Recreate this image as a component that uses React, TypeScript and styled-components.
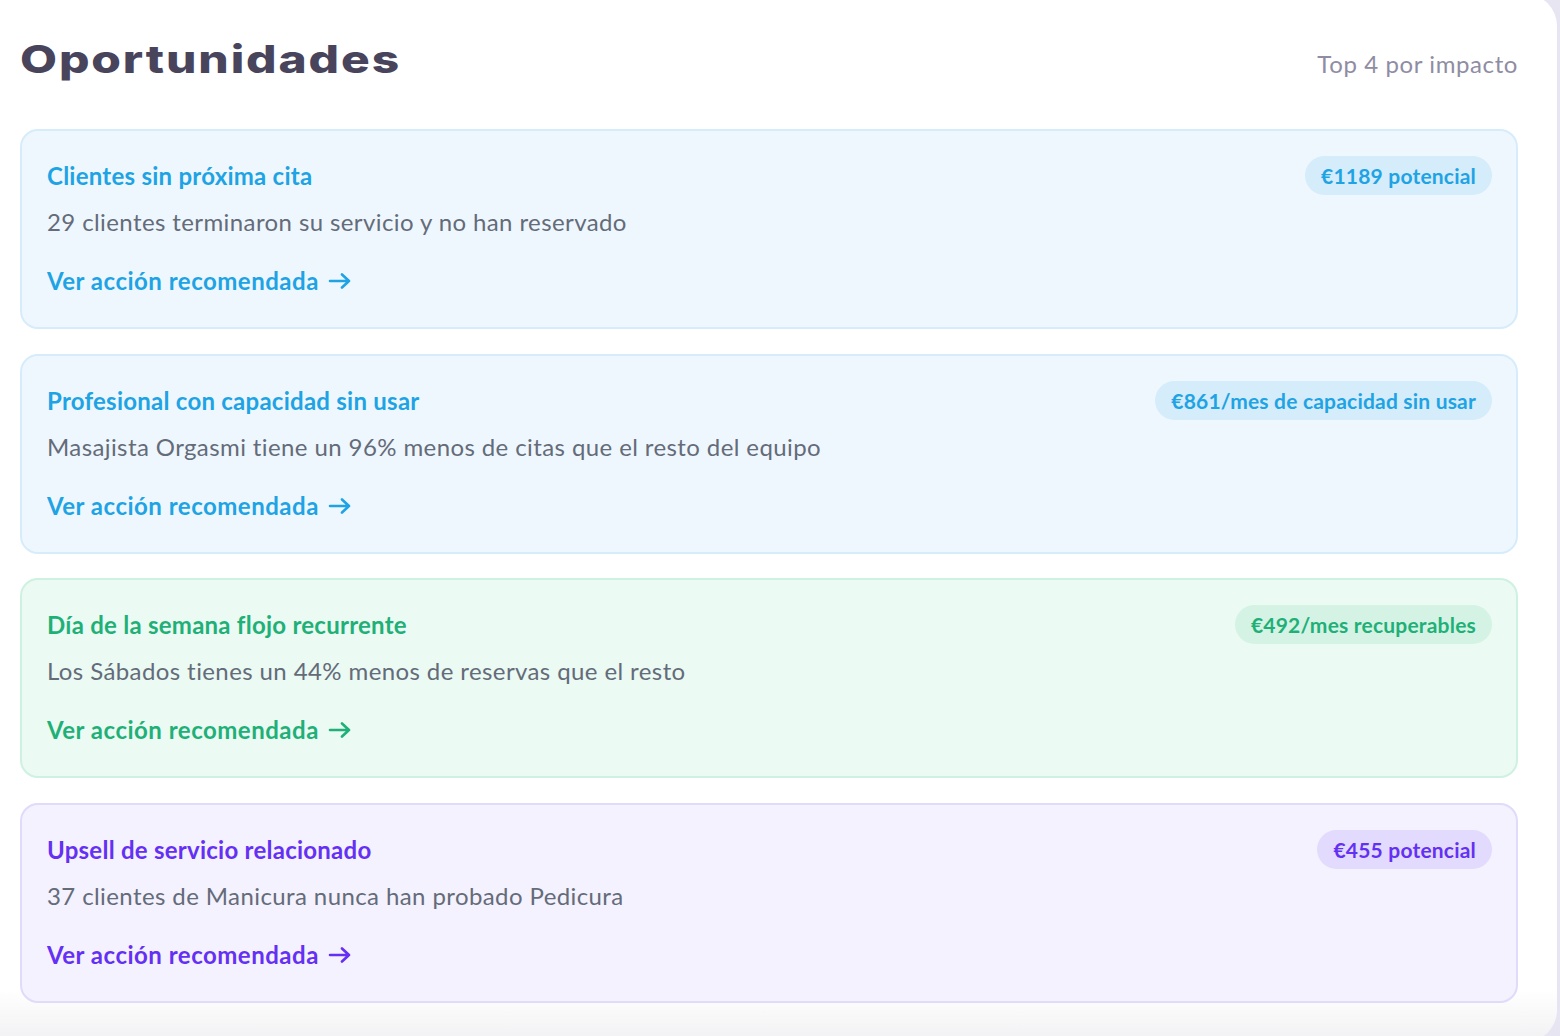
import React from "react";
import styled, { createGlobalStyle } from "styled-components";

const GlobalStyle = createGlobalStyle`
  html, body {
    margin: 0;
    padding: 0;
    background: #e7e5f2;
    overflow: hidden;
  }
  body {
    font-family: Lato, "Noto Sans", sans-serif;
  }
`;

type Tone = "blue" | "green" | "purple";

const tones: Record<Tone, { bg: string; border: string; ink: string; pill: string }> = {
  blue: { bg: "#eff7fe", border: "#d7ecfb", ink: "#1ea3e4", pill: "#d5ecfb" },
  green: { bg: "#ebfaf3", border: "#cff1e1", ink: "#1fb078", pill: "#d4f3e5" },
  purple: { bg: "#f4f2fe", border: "#e0dafb", ink: "#6430f4", pill: "#e2dbfd" },
};

const opportunities: {
  tone: Tone;
  title: string;
  text: string;
  value: string;
}[] = [
  {
    tone: "blue",
    title: "Clientes sin próxima cita",
    text: "29 clientes terminaron su servicio y no han reservado",
    value: "€1189 potencial",
  },
  {
    tone: "blue",
    title: "Profesional con capacidad sin usar",
    text: "Masajista Orgasmi tiene un 96% menos de citas que el resto del equipo",
    value: "€861/mes de capacidad sin usar",
  },
  {
    tone: "green",
    title: "Día de la semana flojo recurrente",
    text: "Los Sábados tienes un 44% menos de reservas que el resto",
    value: "€492/mes recuperables",
  },
  {
    tone: "purple",
    title: "Upsell de servicio relacionado",
    text: "37 clientes de Manicura nunca han probado Pedicura",
    value: "€455 potencial",
  },
];

export default function App() {
  return (
    <>
      <GlobalStyle />
      <Panel>
        <Header>
          <Title>Oportunidades</Title>
          <Caption>Top 4 por impacto</Caption>
        </Header>
        <List>
          {opportunities.map((o) => (
            <Card key={o.title} $tone={o.tone}>
              <CardTop>
                <CardTitle $tone={o.tone}>{o.title}</CardTitle>
                <Badge $tone={o.tone}>{o.value}</Badge>
              </CardTop>
              <CardText>{o.text}</CardText>
              <ActionLink $tone={o.tone} href="#">
                Ver acción recomendada
                <svg width="24" height="16" viewBox="0 0 24 16" fill="none">
                  <path
                    d="M2 8h19M14 1.5 21 8l-7 6.5"
                    stroke="currentColor"
                    strokeWidth="2.6"
                    strokeLinecap="round"
                    strokeLinejoin="round"
                  />
                </svg>
              </ActionLink>
            </Card>
          ))}
        </List>
      </Panel>
    </>
  );
}

const Panel = styled.div`
  box-sizing: border-box;
  width: 1557px;
  height: 1048px;
  margin-top: -6px;
  padding: 41px 39px 0 20px;
  border-radius: 0 32px 32px 0;
  background: linear-gradient(180deg, #ffffff 0%, #ffffff 95%, #f1f1f3 100%);
`;

const Header = styled.div`
  display: flex;
  align-items: baseline;
  justify-content: space-between;
  margin-bottom: 46px;
`;

// wide geometric heading: Inter stretched a little to get the broad letterforms
const Title = styled.h1`
  display: inline-block;
  margin: 0;
  font-family: Inter, "Noto Sans", sans-serif;
  font-size: 38px;
  line-height: 48px;
  font-weight: 800;
  color: #48445c;
  letter-spacing: 1.5px;
  transform: scaleX(1.26);
  transform-origin: left center;
`;

const Caption = styled.span`
  font-size: 24px;
  letter-spacing: 0.6px;
  color: #8f8ca3;
`;

const List = styled.div`
  display: flex;
  flex-direction: column;
  gap: 24.5px;
`;

const Card = styled.div<{ $tone: Tone }>`
  display: flex;
  flex-direction: column;
  align-items: flex-start;
  padding: 25px 24px 31px 25px;
  border: 2px solid ${(p) => tones[p.$tone].border};
  border-radius: 18px;
  background: ${(p) => tones[p.$tone].bg};
`;

const CardTop = styled.div`
  display: flex;
  align-items: center;
  justify-content: space-between;
  align-self: stretch;
  height: 39px;
`;

const CardTitle = styled.h3<{ $tone: Tone }>`
  margin: 0;
  font-size: 24px;
  letter-spacing: 0.25px;
  font-weight: 700;
  color: ${(p) => tones[p.$tone].ink};
`;

const Badge = styled.span<{ $tone: Tone }>`
  display: inline-flex;
  align-items: center;
  height: 39px;
  padding: 0 16px;
  border-radius: 20px;
  font-size: 21px;
  letter-spacing: 0.2px;
  font-weight: 700;
  color: ${(p) => tones[p.$tone].ink};
  background: ${(p) => tones[p.$tone].pill};
`;

const CardText = styled.p`
  margin: 12px 0 0;
  font-size: 24px;
  letter-spacing: 0.4px;
  line-height: 30px;
  color: #646b79;
`;

const ActionLink = styled.a<{ $tone: Tone }>`
  display: inline-flex;
  align-items: center;
  gap: 9px;
  margin-top: 29px;
  font-size: 24px;
  letter-spacing: 0.5px;
  line-height: 30px;
  font-weight: 700;
  text-decoration: none;
  color: ${(p) => tones[p.$tone].ink};
`;
